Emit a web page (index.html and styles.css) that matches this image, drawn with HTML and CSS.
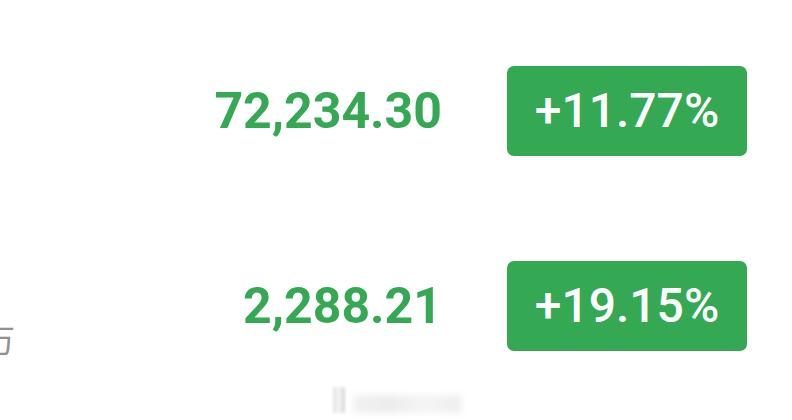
FILE: index.html
```html
<!DOCTYPE html>
<html>

<head>
    <meta charset="utf-8" />
    <title>行情</title>
    <link rel="stylesheet" href="styles.css">
</head>

<body>
    <ul class="quote_list">
        <li class="quote_row">
            <span class="quote_name"></span>
            <span class="quote_price">72,234.30</span>
            <span class="quote_change">+11.77%</span>
        </li>
        <li class="quote_row">
            <span class="quote_name">万</span>
            <span class="quote_price">2,288.21</span>
            <span class="quote_change">+19.15%</span>
        </li>
    </ul>
    <!-- 底部水印 -->
    <div class="mark"><i></i><b></b></div>
</body>

</html>
```

FILE: styles.css
```css
* {
    margin: 0;
    padding: 0;
    box-sizing: border-box;
}

body {
    width: 792px;
    height: 420px;
    overflow: hidden;
    background: #fff;
    font-family: Roboto, "Noto Sans CJK SC", sans-serif;
}

li {
    list-style: none;
}

.quote_list {
    padding: 66px 45px 0 0;
}

.quote_row {
    display: flex;
    align-items: center;
    height: 90px;
}

.quote_row + .quote_row {
    margin-top: 105px;
}

.quote_name {
    flex: 1;
    align-self: flex-end;
    margin: 0 0 -10px -17px;
    font-size: 32px;
    color: #909090;
    line-height: 40px;
}

.quote_price {
    margin-right: 65px;
    font-size: 50px;
    font-weight: 700;
    color: #34a853;
}

.quote_change {
    width: 240px;
    height: 90px;
    line-height: 90px;
    border-radius: 7px;
    background: #34a853;
    color: #fff;
    font-size: 48px;
    font-weight: 500;
    text-align: center;
}

.mark {
    display: flex;
    align-items: flex-end;
    margin: 34px 0 0 333px;
    height: 28px;
}

.mark i {
    width: 12px;
    height: 26px;
    background: linear-gradient(90deg, #e2e2e2, #f6f6f6, #d4d4d4);
    filter: blur(1.5px);
}

.mark b {
    width: 108px;
    height: 18px;
    margin-left: 8px;
    background: linear-gradient(90deg, #f2f2f2, #ececec, #f5f5f5, #eeeeee);
    filter: blur(3px);
}
```
